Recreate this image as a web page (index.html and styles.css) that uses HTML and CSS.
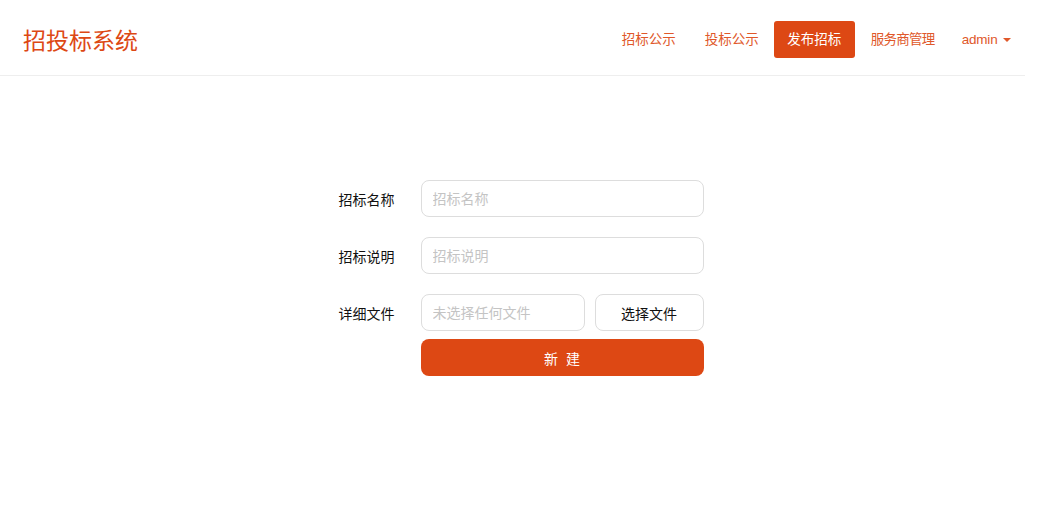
FILE: index.html
```html
<!DOCTYPE html>
<html lang="zh-CN">
<head>
    <meta charset="UTF-8">
    <meta name="viewport" content="width=device-width, initial-scale=1.0">
    <title>招投标系统</title>
    <link rel="stylesheet" href="styles.css">
</head>
<body>
    <div class="navbar">
        <div class="brand">招投标系统</div>
        <ul class="nav">
            <li><a href="#">招标公示</a></li>
            <li><a href="#">投标公示</a></li>
            <li class="active"><a href="#">发布招标</a></li>
            <li class="nav-long"><a href="#">服务商管理</a></li>
            <li class="nav-user"><a href="#">admin <span class="caret"></span></a></li>
        </ul>
    </div>

    <form class="bid-form">
        <div class="form-row">
            <label>招标名称</label>
            <input type="text" class="form-input" placeholder="招标名称">
        </div>
        <div class="form-row">
            <label>招标说明</label>
            <input type="text" class="form-input" placeholder="招标说明">
        </div>
        <div class="form-row">
            <label>详细文件</label>
            <div class="file-group">
                <input type="text" class="form-input file-name" placeholder="未选择任何文件" readonly>
                <button type="button" class="btn-file">选择文件</button>
            </div>
        </div>
        <div class="form-row submit-row">
            <label></label>
            <button type="button" class="btn-submit">新&nbsp;&nbsp;建</button>
        </div>
    </form>
</body>
</html>
```

FILE: styles.css
```css
body {
    margin: 0;
    font-family: 'Liberation Sans', 'Noto Sans CJK SC', sans-serif;
    font-size: 14px;
    color: #222;
    background-color: #fff;
}
.navbar {
    width: 1025px;
    height: 75px;
    border-bottom: 1px solid #eee;
    display: flex;
    align-items: center;
    justify-content: space-between;
    box-sizing: content-box;
}
.brand {
    margin-left: 23px;
    margin-top: 2px;
    font-size: 23px;
    color: #dd4814;
}
.nav {
    list-style: none;
    margin: 4px 0 0;
    padding: 0;
    display: flex;
    align-items: center;
}
.nav li {
    margin-left: 1px;
}
.nav li a {
    display: block;
    padding: 0 14px;
    line-height: 37px;
    font-size: 13.5px;
    color: #e0582a;
    text-decoration: none;
}
.nav li.active a {
    padding: 0 13.5px;
    background-color: #dd4814;
    color: #fff;
    border-radius: 3px;
}
.nav li.nav-long a {
    padding: 0 14px 0 15px;
    letter-spacing: -0.7px;
}
.nav li.nav-user a {
    padding: 0 14px 0 12px;
    letter-spacing: -0.2px;
}
.caret {
    display: inline-block;
    width: 0;
    height: 0;
    margin-left: 2px;
    vertical-align: middle;
    border-top: 4px solid #e0582a;
    border-left: 4px solid transparent;
    border-right: 4px solid transparent;
}
.bid-form {
    width: 365px;
    margin: 104px auto 0;
    display: flex;
    flex-direction: column;
    gap: 20px;
}
.form-row {
    display: flex;
    align-items: center;
}
.form-row label {
    width: 82px;
    flex-shrink: 0;
    color: #111;
}
.form-input {
    width: 283px;
    height: 37px;
    box-sizing: border-box;
    border: 1px solid #ddd;
    border-radius: 8px;
    padding: 0 11px;
    font-family: inherit;
    font-size: 14px;
    outline: none;
}
.form-input::placeholder {
    color: #c4c4c4;
}
.file-group {
    display: flex;
    gap: 10px;
}
.file-name {
    width: 164px;
}
.btn-file {
    width: 109px;
    height: 37px;
    border: 1px solid #ddd;
    border-radius: 8px;
    background-color: #fff;
    font-family: inherit;
    font-size: 14px;
    color: #111;
    cursor: pointer;
}
.submit-row {
    margin-top: -12px;
}
.btn-submit {
    width: 283px;
    height: 37px;
    border: none;
    border-radius: 8px;
    background-color: #dd4814;
    color: #fff;
    font-family: inherit;
    font-size: 14px;
    cursor: pointer;
}
```
